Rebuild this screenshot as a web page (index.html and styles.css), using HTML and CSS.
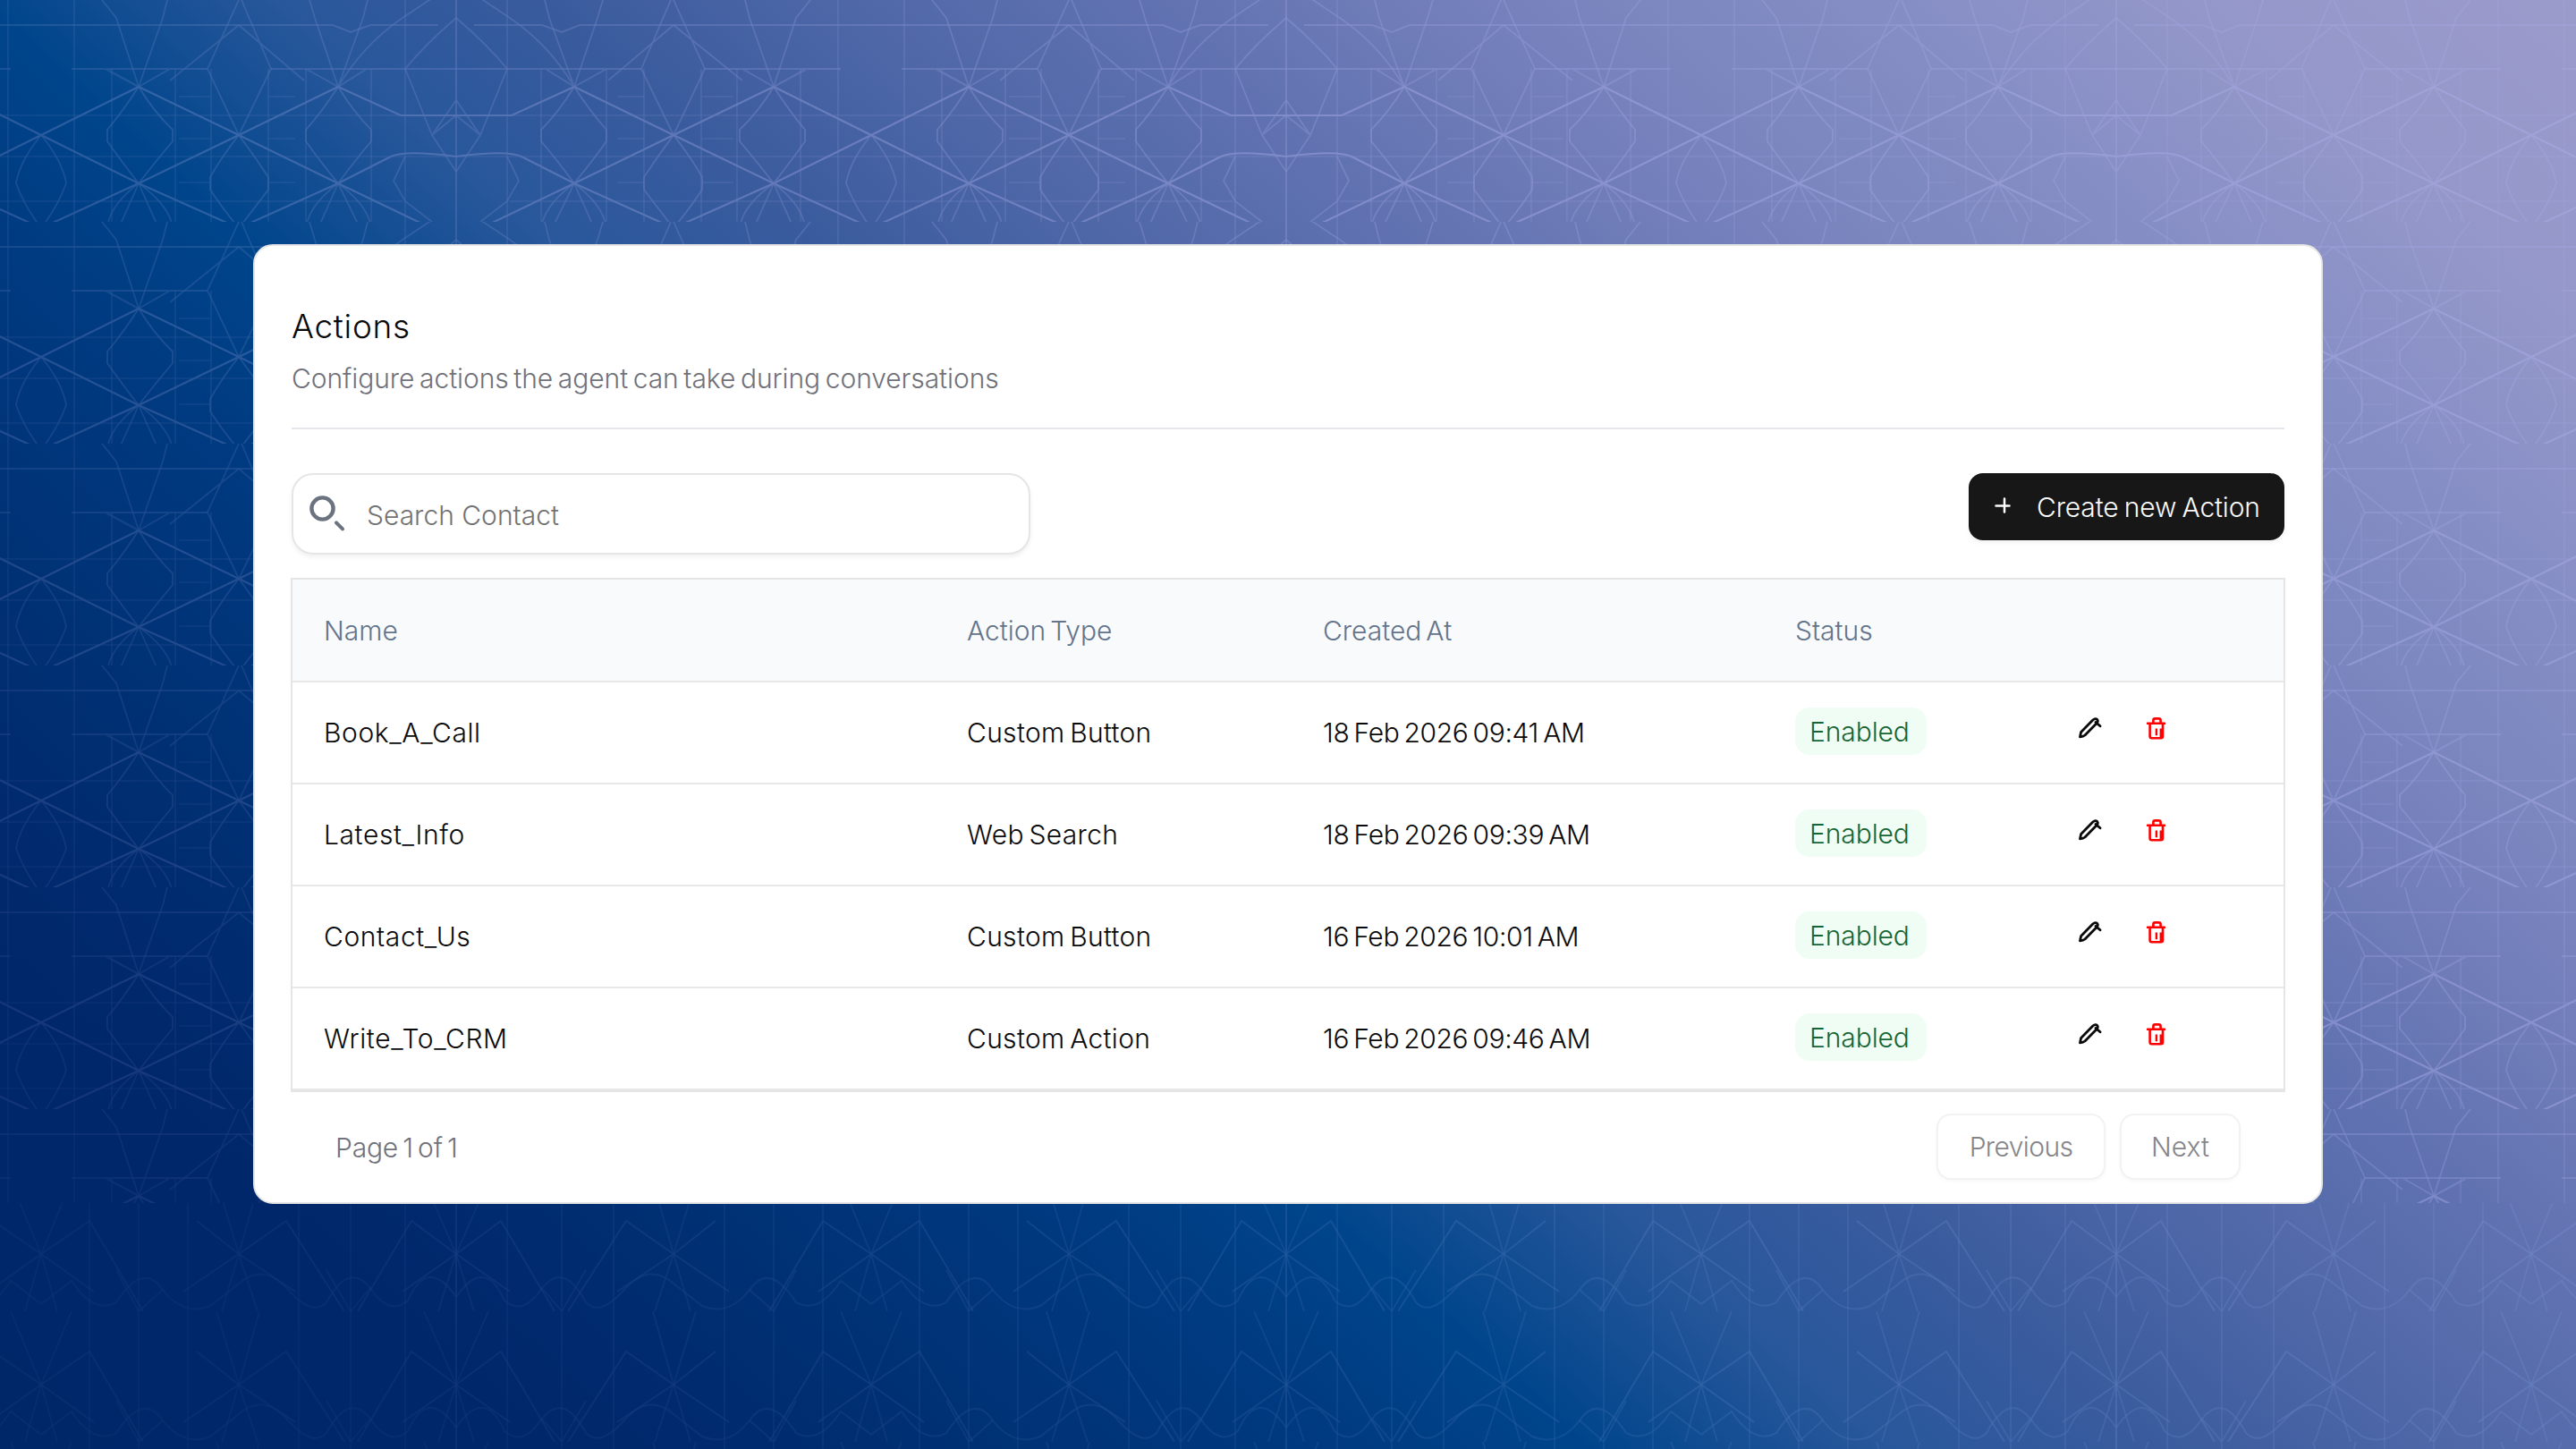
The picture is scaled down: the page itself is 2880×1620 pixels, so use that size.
FILE: index.html
```html
<!DOCTYPE html>
<html lang="en">
	<head>
		<title>Actions</title>

		<meta charset="utf-8">
		<meta name="viewport" content="width=device-width, initial-scale=1.0">

		<link rel="stylesheet" href="styles.css">
	</head>

	<body>
		<!-- Line pattern behind the card -->
		<svg class="backdrop" width="2880" height="1620" viewBox="0 0 2880 1620" fill="none">
			<defs>
				<g id="half">
					<path d="M132 97L243 151L132 205M355 97L243 151L355 205M355 97L464 151L355 205M132 97L62 129H0M132 205L75 176Q60 167 0 175M132 205L30 254M132 205L243 255M355 205L243 255M355 205L464 255" stroke-width="2.2"/>
					<path d="M20 28H96L118 36L138 28H464M0 77H207M278 77H430M132 97L100 77M132 97L168 77M355 97L320 77M355 97L392 77" stroke-width="2" stroke-opacity=".6"/>
					<path d="M0 129H464M0 175H464M60 225H464M180 108H210M275 108H310M180 155H210M275 155H310M180 204H210M275 204H310" stroke-opacity=".3"/>
					<path d="M0 0V248M57 0V248M95 77V248M168 77V248M210 77V248M274 77V248M314 77V248M385 77V248M427 0V248" stroke-opacity=".4"/>
					<path d="M132 97Q115 125 95 145V158Q112 178 132 205Q154 178 168 158V145Q150 125 132 97M355 97Q338 125 317 145V158Q334 178 355 205Q376 178 390 158V145Q373 125 355 97M243 151Q225 175 210 198V212Q225 232 243 255Q262 232 275 212V198Q262 175 243 151" stroke-opacity=".7"/>
					<path d="M243 151L207 77L240 0M243 151L278 77L243 0M132 97Q104 50 60 20L0 -20M132 97L158 20L170 -20M132 97L104 20L94 -20M355 97L380 20L420 -30M355 97L328 20L318 -20M243 28L170 90M243 28L320 90" stroke-opacity=".6"/>
					<path d="M132 205Q98 230 95 255M132 205Q165 230 168 255M132 205L110 250M132 205L152 250M355 205Q320 230 317 255M355 205Q388 230 390 255M355 205L335 250M355 205L375 250M0 112L27 151L0 192M0 20Q35 50 57 77L27 151L0 129M57 175L70 202L57 225L27 248M464 151Q440 180 436 205Q445 230 464 255" stroke-opacity=".6"/>
				</g>
				<g id="low">
					<path d="M0 82L50 45L110 146M0 82L60 124M243 82L190 45L125 146M243 82L180 124M243 82L290 45M243 82L305 124M464 82L410 45L350 146M464 82L405 124" stroke-width="2" stroke-opacity=".6"/>
					<path d="M0 130Q32 84 54 134Q75 152 96 120Q120 90 145 136Q160 152 186 124Q215 90 243 115L275 140Q305 152 328 122Q350 90 380 136Q405 150 430 112L464 138" stroke-width="2" stroke-opacity=".5"/>
					<path d="M0 82L36 0M0 82L20 146M243 82L220 0M243 82L268 0M243 82L222 146M243 82L262 146M464 82L430 0M464 82L446 146M96 120L118 146L145 100M328 122L355 146L380 100" stroke-opacity=".5"/>
					<path d="M0 0V146M57 0V146M118 0V146M176 0V146M300 0V146M355 0V146M410 0V146" stroke-opacity=".45"/>
				</g>
				<pattern id="stars" x="46" y="0" width="928" height="248" patternUnits="userSpaceOnUse">
					<g transform="translate(464 0)" stroke="#aeb0ec" stroke-width="1.8">
						<use href="#half"/>
						<use href="#half" transform="scale(-1 1)"/>
					</g>
				</pattern>
				<pattern id="waves" x="46" y="1320" width="928" height="146" patternUnits="userSpaceOnUse">
					<g transform="translate(464 0)" stroke="#7f9fe0" stroke-width="1.8">
						<use href="#low"/>
						<use href="#low" transform="scale(-1 1)"/>
					</g>
				</pattern>
				<linearGradient id="fade" gradientUnits="userSpaceOnUse" x1="300" y1="1500" x2="1500" y2="200">
					<stop offset="0" stop-color="#fff" stop-opacity=".11"/>
					<stop offset=".5" stop-color="#fff" stop-opacity=".25"/>
					<stop offset="1" stop-color="#fff" stop-opacity=".42"/>
				</linearGradient>
				<mask id="soft" maskUnits="userSpaceOnUse" x="0" y="0" width="2880" height="1620">
					<rect width="2880" height="1620" fill="url(#fade)"/>
				</mask>
			</defs>
			<g mask="url(#soft)">
				<rect width="2880" height="1345" fill="url(#stars)"/>
				<rect y="1345" width="2880" height="275" fill="url(#waves)"/>
			</g>
		</svg>

		<svg class="symbols">
			<symbol id="pencil" viewBox="0 0 26 24">
				<path d="M1.5 21.8L2.6 16.6L15.8 3Q18.6 .6 20.6 2.4Q22.2 4.2 20.2 6.6L7 20Q5 21.6 1.5 21.8ZM19 5.4L24 9.8" fill="none" stroke="currentColor" stroke-width="2.8" stroke-linecap="round" stroke-linejoin="round"/>
			</symbol>
			<symbol id="trash" viewBox="0 0 21 25">
				<path d="M1 6.8H20M7.4 6V3.4Q7.4 1.4 9.4 1.4H13.4Q15.6 1.4 15.6 3.4V6M3.6 7V21Q3.6 23.2 5.6 23.2H16Q18 23.2 18 21V7" fill="none" stroke="currentColor" stroke-width="2.6" stroke-linecap="round"/>
				<path d="M10.9 12.4V20.2M15.8 12.4V22" fill="none" stroke="currentColor" stroke-width="2.4"/>
			</symbol>
		</svg>

		<div class="card">
			<div class="header">
				<h1 class="title">Actions</h1>
				<p class="subtitle">Configure actions the agent can take during conversations</p>
			</div>

			<div class="toolbar">
				<label class="search">
					<svg class="search-icon" width="40" height="40" viewBox="0 0 40 40" fill="none" stroke="#6b7280">
						<circle cx="14.5" cy="14.5" r="12.1" stroke-width="4.4"/>
						<path d="M30 30.4L37 37.4" stroke-width="4" stroke-linecap="round"/>
					</svg>
					<input class="search-input" type="text" placeholder="Search Contact">
				</label>
				<button class="create-button">
					<svg class="plus" width="18" height="18" viewBox="0 0 18 18" stroke="#fff" stroke-width="2.5" stroke-linecap="round">
						<path d="M1.5 9.5H16.5M11 1.5V16.5"/>
					</svg>
					Create new Action
				</button>
			</div>

			<table class="actions-table">
				<colgroup>
					<col class="col-name">
					<col class="col-type">
					<col class="col-created">
					<col class="col-status">
					<col>
				</colgroup>
				<thead>
					<tr>
						<th>Name</th>
						<th>Action Type</th>
						<th>Created At</th>
						<th>Status</th>
						<th></th>
					</tr>
				</thead>
				<tbody>
					<tr>
						<td class="name">Book_A_Call</td>
						<td class="type">Custom Button</td>
						<td class="created">18 Feb 2026 09:41 AM</td>
						<td class="status"><span class="badge">Enabled</span></td>
						<td><div class="row-icons"><svg class="edit"><use href="#pencil"/></svg><svg class="delete"><use href="#trash"/></svg></div></td>
					</tr>
					<tr>
						<td class="name">Latest_Info</td>
						<td class="type">Web Search</td>
						<td class="created">18 Feb 2026 09:39 AM</td>
						<td class="status"><span class="badge">Enabled</span></td>
						<td><div class="row-icons"><svg class="edit"><use href="#pencil"/></svg><svg class="delete"><use href="#trash"/></svg></div></td>
					</tr>
					<tr>
						<td class="name">Contact_Us</td>
						<td class="type">Custom Button</td>
						<td class="created">16 Feb 2026 10:01 AM</td>
						<td class="status"><span class="badge">Enabled</span></td>
						<td><div class="row-icons"><svg class="edit"><use href="#pencil"/></svg><svg class="delete"><use href="#trash"/></svg></div></td>
					</tr>
					<tr>
						<td class="name">Write_To_CRM</td>
						<td class="type">Custom Action</td>
						<td class="created">16 Feb 2026 09:46 AM</td>
						<td class="status"><span class="badge">Enabled</span></td>
						<td><div class="row-icons"><svg class="edit"><use href="#pencil"/></svg><svg class="delete"><use href="#trash"/></svg></div></td>
					</tr>
				</tbody>
			</table>

			<div class="footer">
				<p class="page-count">Page 1 of 1</p>
				<div class="pager">
					<button class="page-button previous">Previous</button>
					<button class="page-button next">Next</button>
				</div>
			</div>
		</div>
	</body>
</html>
```
FILE: styles.css
```css
* {
  box-sizing: border-box;
}

body {
  margin: 0;
  width: 2880px;
  height: 1620px;
  padding: 273px 283px 0;
  overflow: hidden;
  font-family: Inter, sans-serif;
  font-weight: 340;
  font-size: 30px;
  line-height: 40px;
  color: #0a0a0a;
  background: linear-gradient(42deg, #002768 0%, #00276a 13%, #002c6f 19%, #003a80 32%, #00458b 38%, #28579b 45%, #3b5c9e 52%, #5068a8 59%, #6172b1 66%, #7883bd 75%, #868fc5 84%, #9497c9 91%, #9a9bcb 100%);
}

.backdrop {
  position: absolute;
  top: 0;
  left: 0;
}

.symbols {
  display: none;
}

.card {
  position: relative;
  width: 2314px;
  height: 1073px;
  padding: 66px 41px 0;
  border: 2px solid #e5e5e5;
  border-radius: 22px;
  background-color: #fff;
}

.header {
  height: 139px;
  border-bottom: 2px solid #e5e7eb;
}

.title {
  margin: 0;
  font-size: 37px;
  font-weight: 340;
  line-height: 48px;
  letter-spacing: 0.7px;
}

.subtitle {
  margin: 14px 0 0;
  color: #71717a;
  letter-spacing: -0.07px;
  word-spacing: -2.7px;
}

.toolbar {
  display: flex;
  justify-content: space-between;
  align-items: flex-start;
  margin-top: 49px;
}

.search {
  display: flex;
  align-items: center;
  width: 826px;
  height: 91px;
  padding: 0 18px;
  border: 2px solid #e5e5e5;
  border-radius: 24px;
  box-shadow: 0 3px 5px rgba(0, 0, 0, 0.06);
}

.search-icon {
  flex: none;
  margin-top: -2px;
}

.search-input {
  flex: 1;
  margin-left: 24px;
  padding: 2px 0 0;
  border: 0;
  outline: 0;
  font: inherit;
  background: none;
}

.search-input::placeholder {
  color: #737373;
  opacity: 1;
}

.create-button {
  display: flex;
  align-items: center;
  width: 353px;
  height: 75px;
  padding: 0 0 0 28px;
  border: 0;
  border-radius: 16px;
  font: inherit;
  white-space: nowrap;
  letter-spacing: -0.15px;
  word-spacing: -2px;
  color: #fafafa;
  background-color: #171717;
  box-shadow: 0 3px 4px rgba(0, 0, 0, 0.05);
}

.plus {
  margin: -4px 29px 0 1px;
}

/* Table */

.actions-table {
  width: 2230px;
  margin: 26px 0 0 -1px;
  table-layout: fixed;
  border-collapse: separate;
  border-spacing: 0;
  border: 2px solid #e5e5e5;
}

.col-name {
  width: 719px;
}

.col-type {
  width: 398px;
}

.col-created {
  width: 528px;
}

.col-status {
  width: 317px;
}

.actions-table th,
.actions-table td {
  height: 114px;
  padding: 0 0 1px 35px;
  border-bottom: 2px solid #e8e8e8;
  text-align: left;
  vertical-align: middle;
}

.actions-table th {
  height: 115px;
  padding-bottom: 0;
  font-weight: 340;
  color: #64748b;
  word-spacing: -3.5px;
  background-color: #f8fafc;
}

.name {
  letter-spacing: 0.6px;
}

.type {
  letter-spacing: 0.3px;
  word-spacing: -3px;
}

.created {
  letter-spacing: -0.35px;
  word-spacing: -3px;
}

.badge {
  display: block;
  width: 147px;
  height: 53px;
  margin-top: -2px;
  padding-left: 16px;
  border-radius: 16px;
  line-height: 54px;
  letter-spacing: -0.1px;
  color: #166534;
  background-color: #f0fdf4;
}

.row-icons {
  display: flex;
  gap: 50px;
  margin-top: -8px;
}

.edit {
  width: 26px;
  height: 24px;
}

.delete {
  width: 21px;
  height: 25px;
  color: #f00;
}

/* Pagination */

.footer {
  display: flex;
  justify-content: space-between;
  margin-top: 24px;
  padding: 0 49px 0 49px;
}

.page-count {
  margin: 18px 0 0;
  color: #71717a;
  letter-spacing: -0.2px;
  word-spacing: -3px;
}

.pager {
  display: flex;
  gap: 16px;
}

.page-button {
  height: 74px;
  padding: 0;
  border: 2px solid #f2f2f2;
  border-radius: 16px;
  font: inherit;
  color: #85858a;
  background-color: #fff;
  box-shadow: 0 2px 4px rgba(0, 0, 0, 0.03);
}

.previous {
  width: 189px;
  letter-spacing: -0.6px;
}

.next {
  width: 135px;
}
```
